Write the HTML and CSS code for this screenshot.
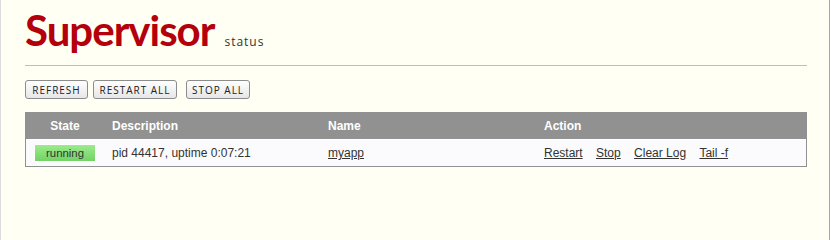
FILE: index.html
```html
<!DOCTYPE html>
<html lang="en">
<head>
<meta charset="utf-8">
<title>Supervisor Status</title>
<link rel="stylesheet" href="styles.css">
</head>
<body>
<div class="wrapper">
  <div class="header">
    <h1 class="logo"><span class="logo-main">Supervisor</span><span class="logo-sub">status</span></h1>
  </div>
  <ul class="buttons">
    <li><a class="btn btn-refresh" href="#">Refresh</a></li>
    <li><a class="btn btn-restart" href="#">Restart All</a></li>
    <li><a class="btn btn-stop" href="#">Stop All</a></li>
  </ul>
  <table class="procs">
    <thead>
      <tr>
        <th class="state">State</th>
        <th class="desc">Description</th>
        <th class="name">Name</th>
        <th class="action">Action</th>
      </tr>
    </thead>
    <tbody>
      <tr>
        <td class="status"><span class="status-running">running</span></td>
        <td>pid 44417, uptime 0:07:21</td>
        <td><a href="#">myapp</a></td>
        <td class="action">
          <ul class="actions">
            <li><a href="#">Restart</a></li>
            <li><a href="#">Stop</a></li>
            <li><a href="#">Clear Log</a></li>
            <li><a href="#">Tail -f</a></li>
          </ul>
        </td>
      </tr>
    </tbody>
  </table>
</div>
</body>
</html>
```
FILE: styles.css
```css
html {
  background: #ffffff;
  height: 100%;
}
body {
  margin: 0 1px 0 0;
  padding: 0 23px 0 24px;
  min-height: 100%;
  box-sizing: border-box;
  background: #fffff3;
  border-left: 1px solid #dcdcdc;
  border-right: 1px solid #a8a8a8;
  font: 12px/18px "Liberation Sans", Arial, sans-serif;
  color: #333;
}
.wrapper {
  width: 782px;
}
.header {
  padding-top: 9px;
  height: 66px;
  box-sizing: border-box;
  border-bottom: 1px solid #bebebe;
  margin-bottom: 14px;
}
.logo {
  margin: 0;
  display: flex;
  align-items: baseline;
  line-height: 1;
  font-weight: normal;
}
.logo-main {
  font-family: Lato, "Open Sans", sans-serif;
  font-weight: 700;
  font-size: 42px;
  letter-spacing: -1px;
  color: #b3000b;
}
.logo-sub {
  font-family: "Open Sans", "DejaVu Sans", sans-serif;
  font-size: 12px;
  letter-spacing: 1px;
  color: #333;
  margin-left: 10px;
}
.buttons {
  list-style: none;
  margin: 0 0 13px 0;
  padding: 0;
  display: flex;
}
.buttons li {
  margin-right: 5px;
}
.buttons li + li + li {
  margin-left: 4px;
}
.btn {
  display: flex;
  align-items: center;
  justify-content: center;
  height: 19px;
  box-sizing: border-box;
  border: 1px solid #8c8c8c;
  border-radius: 3px;
  background: linear-gradient(#ffffff, #e6e6e6);
  text-decoration: none;
  text-transform: uppercase;
  font-family: "Open Sans", "DejaVu Sans", sans-serif;
  font-size: 10px;
  font-weight: 500;
  letter-spacing: 1px;
  color: #222;
  line-height: 1;
  padding-top: 1px;
}
.btn-refresh { width: 63px; }
.btn-restart { width: 84px; }
.btn-stop { width: 64px; }

.procs {
  width: 100%;
  border: 1px solid #919191;
  border-spacing: 0;
  border-collapse: separate;
}
.procs th,
.procs td {
  padding: 4px 8px;
  border-bottom: 1px solid #fff;
  text-align: left;
  vertical-align: middle;
  font: 12px/18px "Liberation Sans", Arial, sans-serif;
}
.procs th {
  background: #919191;
  color: #fff;
  font-weight: bold;
}
.procs td {
  background: #fbfbfd;
  color: #333;
}
.procs tbody tr:last-child td {
  border-bottom: none;
}
.procs th.state {
  text-align: center;
  width: 62px;
}
.procs th.desc { width: 200px; }
.procs th.name { width: 200px; }
.procs a {
  color: #333;
  text-decoration: underline;
}
.status-running {
  display: block;
  width: 60px;
  height: 16px;
  border: 1px solid #fff;
  text-align: center;
  font-size: 95%;
  line-height: 16px;
  background: linear-gradient(#9ceb8d, #72d266);
  color: #333;
}
.actions {
  list-style: none;
  margin: 0;
  padding: 0;
  display: inline;
}
.actions li {
  display: inline;
  margin-right: 10px;
}
```
